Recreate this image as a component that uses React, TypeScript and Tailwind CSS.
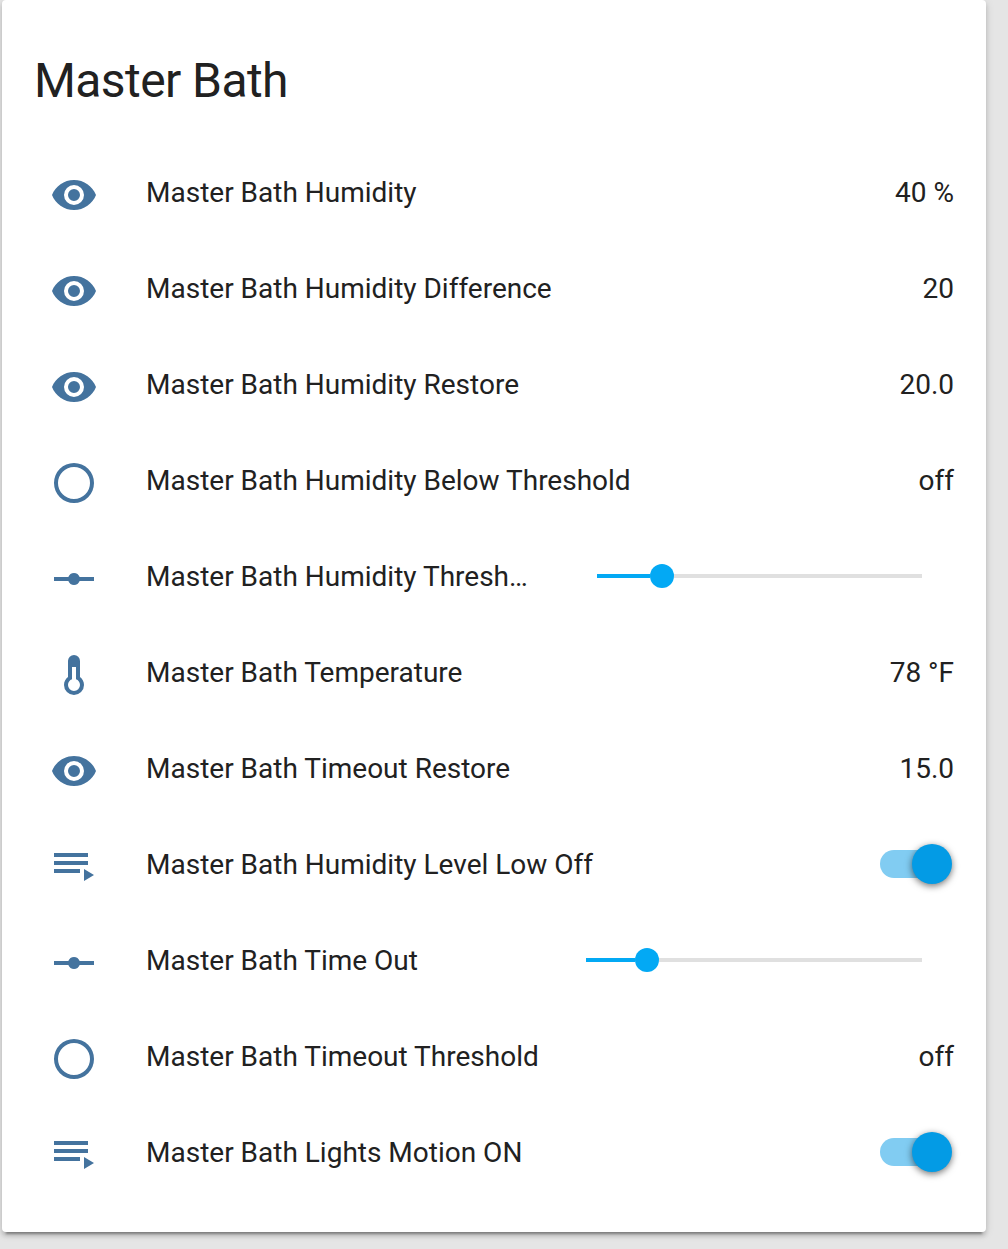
import React from "react";

type Kind = "eye" | "circle" | "slider" | "thermometer" | "script";
type Row = { icon: Kind; name: string; value?: string; slider?: "humidity" | "timeout" };

const rows: Row[] = [
  { icon: "eye", name: "Master Bath Humidity", value: "40 %" },
  { icon: "eye", name: "Master Bath Humidity Difference", value: "20" },
  { icon: "eye", name: "Master Bath Humidity Restore", value: "20.0" },
  { icon: "circle", name: "Master Bath Humidity Below Threshold", value: "off" },
  { icon: "slider", name: "Master Bath Humidity Thresh…", slider: "humidity" },
  { icon: "thermometer", name: "Master Bath Temperature", value: "78 °F" },
  { icon: "eye", name: "Master Bath Timeout Restore", value: "15.0" },
  { icon: "script", name: "Master Bath Humidity Level Low Off" },
  { icon: "slider", name: "Master Bath Time Out", slider: "timeout" },
  { icon: "circle", name: "Master Bath Timeout Threshold", value: "off" },
  { icon: "script", name: "Master Bath Lights Motion ON" },
];

const paths: Record<Kind, string> = {
  eye: "M12,9A3,3 0 0,0 9,12A3,3 0 0,0 12,15A3,3 0 0,0 15,12A3,3 0 0,0 12,9M12,17A5,5 0 0,1 7,12A5,5 0 0,1 12,7A5,5 0 0,1 17,12A5,5 0 0,1 12,17M12,4.5C7,4.5 2.73,7.61 1,12C2.73,16.39 7,19.5 12,19.5C17,19.5 21.27,16.39 23,12C21.27,7.61 17,4.5 12,4.5Z",
  circle: "M12,20A8,8 0 0,1 4,12A8,8 0 0,1 12,4A8,8 0 0,1 20,12A8,8 0 0,1 12,20M12,2A10,10 0 0,0 2,12A10,10 0 0,0 12,22A10,10 0 0,0 22,12A10,10 0 0,0 12,2Z",
  slider: "M2,11H9.17C9.58,9.83 10.69,9 12,9C13.31,9 14.42,9.83 14.83,11H22V13H14.83C14.42,14.17 13.31,15 12,15C10.69,15 9.58,14.17 9.17,13H2V11Z",
  thermometer: "M17,17A5,5 0 0,1 12,22A5,5 0 0,1 7,17C7,15.36 7.79,13.91 9,13V5A3,3 0 0,1 12,2A3,3 0 0,1 15,5V13C16.21,13.91 17,15.36 17,17M11,8V14.17C9.83,14.58 9,15.69 9,17A3,3 0 0,0 12,20A3,3 0 0,0 15,17C15,15.69 14.17,14.58 13,14.17V8H11Z",
  script: "M19,9H2V11H19V9M19,5H2V7H19V5M2,15H15V13H2V15M17,13V19L22,16L17,13Z",
};

function Slider({ kind }: { kind: "humidity" | "timeout" }) {
  const humidity = kind === "humidity";
  return (
    <div className={`mr-8 flex h-6 items-center ${humidity ? "w-[325px]" : "w-[336px]"}`}>
      <div className={`h-1 bg-[#03a9f4] ${humidity ? "w-[53px]" : "w-[49px]"}`} />
      <div className="size-6 rounded-full bg-[#03a9f4]" />
      <div className="h-1 flex-1 bg-[#e0e0e0]" />
    </div>
  );
}

function Toggle() {
  return (
    <div className="mr-0.5 grid h-10 w-[72px] items-center">
      <div className="col-start-1 row-start-1 h-7 w-16 rounded-full bg-[#81ccf2]" />
      <div className="col-start-1 row-start-1 size-10 justify-self-end rounded-full bg-[#039be5] shadow-[0_2px_7px_rgba(0,0,0,0.55)]" />
    </div>
  );
}

export default function App() {
  return (
    <div className="h-[1249px] w-[1008px] overflow-hidden bg-[#e5e5e5] pl-0.5 font-['Roboto',sans-serif] text-[#212121]">
      <main className="h-[1232px] w-[984px] rounded bg-white pt-12 shadow-[0_4px_4px_0_rgba(0,0,0,0.14),0_2px_10px_0_rgba(0,0,0,0.12),0_6px_2px_-4px_rgba(0,0,0,0.3)]">
        <h1 className="ml-8 h-24 pt-px text-[48px] leading-[64px] tracking-[-0.576px]">Master Bath</h1>
        {rows.map((row) => (
          <div key={row.name} className="flex h-24 items-center pr-8 pl-12">
            <svg className="mt-1.5 mr-12 size-12 shrink-0 fill-[#44739e]" viewBox="0 0 24 24" aria-hidden="true">
              <path d={paths[row.icon]} />
            </svg>
            <span className="flex-1 pt-0.5 text-[28px] leading-10 whitespace-nowrap">{row.name}</span>
            {row.value && <span className="pt-0.5 text-[28px] leading-10">{row.value}</span>}
            {row.slider && <Slider kind={row.slider} />}
            {row.icon === "script" && <Toggle />}
          </div>
        ))}
      </main>
    </div>
  );
}
